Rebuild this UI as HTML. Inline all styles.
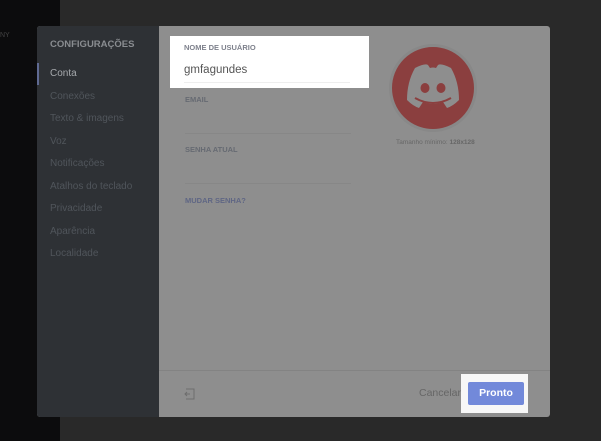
<!DOCTYPE html>
<html><head><style>
*{margin:0;padding:0;box-sizing:border-box}
body{width:601px;height:441px;overflow:hidden;background:#292929;font-family:"Liberation Sans",sans-serif;position:relative}
.abs{position:absolute}
.side div{position:absolute;left:13px;font-size:10px;color:#50555b}
.lbl{position:absolute;font-size:7.5px;font-weight:bold;color:#666a72}
.line{position:absolute;left:185px;width:166px;height:1px;background:#878787}
</style></head><body>
<div class="abs" style="left:0;top:0;width:60px;height:441px;background:#0c0c0d"></div>
<div class="abs" style="left:0;top:32px;font-size:7px;color:#444">NY</div>
<div class="abs" style="left:37px;top:26px;width:513px;height:391px;background:#8e8e8e;border-radius:3px;overflow:hidden">
  <div class="abs side" style="left:0;top:0;width:122px;height:391px;background:#2e3135">
    <div style="top:13px;font-weight:bold;font-size:9.5px;color:#8a8d91">CONFIGURAÇÕES</div>
    <div class="abs" style="left:0;top:37px;width:2px;height:22px;background:#5f6a92"></div>
    <div style="top:42px;color:#a6a9ad">Conta</div>
    <div style="top:65px">Conexões</div>
    <div style="top:87px">Texto &amp; imagens</div>
    <div style="top:110px">Voz</div>
    <div style="top:132px">Notificações</div>
    <div style="top:155px">Atalhos do teclado</div>
    <div style="top:177px">Privacidade</div>
    <div style="top:200px">Aparência</div>
    <div style="top:222px">Localidade</div>
  </div>
  <div class="abs" style="left:122px;top:344px;width:391px;height:1px;background:#838383"></div>
  <svg class="abs" style="left:147px;top:362px" width="12" height="12" viewBox="0 0 12 12" fill="none" stroke="#6d6d6d" stroke-width="1"><path d="M2 1h8v10H2M6 6H1M3 4L1 6l2 2"/></svg>
  <div class="abs" style="left:382px;top:361px;font-size:10.5px;color:#666">Cancelar</div>
  <div class="abs" style="left:424px;top:348px;width:67px;height:39px;background:#f7f7f7"></div>
  <div class="abs" style="left:431px;top:356px;width:56px;height:23px;background:#7289da;border-radius:2px;color:#fff;font-size:10.5px;font-weight:bold;text-align:center;line-height:23px">Pronto</div>
</div>
<div class="abs" style="left:170px;top:36px;width:199px;height:52px;background:#fff"></div>
<div class="abs" style="left:184px;top:43px;font-size:7.5px;font-weight:bold;color:#7e818c">NOME DE USUÁRIO</div>
<div class="abs" style="left:184px;top:64px;font-size:11.5px;color:#555">gmfagundes</div>
<div class="abs" style="left:184px;top:82px;width:166px;height:1px;background:#eee"></div>
<div class="lbl" style="left:185px;top:95px">EMAIL</div>
<div class="line" style="top:133px"></div>
<div class="lbl" style="left:185px;top:145px">SENHA ATUAL</div>
<div class="line" style="top:183px"></div>
<div class="lbl" style="left:185px;top:196px;color:#5f6684">MUDAR SENHA?</div>
<div class="abs" style="left:389px;top:44px;width:88px;height:88px;border-radius:50%;background:#8b3f3f;border:3px solid #888"></div>
<svg class="abs" style="left:403px;top:62px" width="60" height="48" viewBox="0 0 60 48"><path fill="#8e8e8e" d="M12 6 Q22 1 25 3 L27 6 Q30 5 33 6 L35 3 Q38 1 48 6 Q56 20 56 38 Q50 44 44 46 L40 40 Q30 44 20 40 L16 46 Q10 44 4 38 Q4 20 12 6Z"/><ellipse cx="22" cy="26" rx="4.5" ry="5" fill="#8b3f3f"/><ellipse cx="38" cy="26" rx="4.5" ry="5" fill="#8b3f3f"/><path d="M12 36 Q30 46 48 36" stroke="#8b3f3f" stroke-width="2" fill="none"/></svg>
<div class="abs" style="left:396px;top:139px;font-size:6.5px;color:#676767">Tamanho mínimo: <b>128x128</b></div>
</body></html>
